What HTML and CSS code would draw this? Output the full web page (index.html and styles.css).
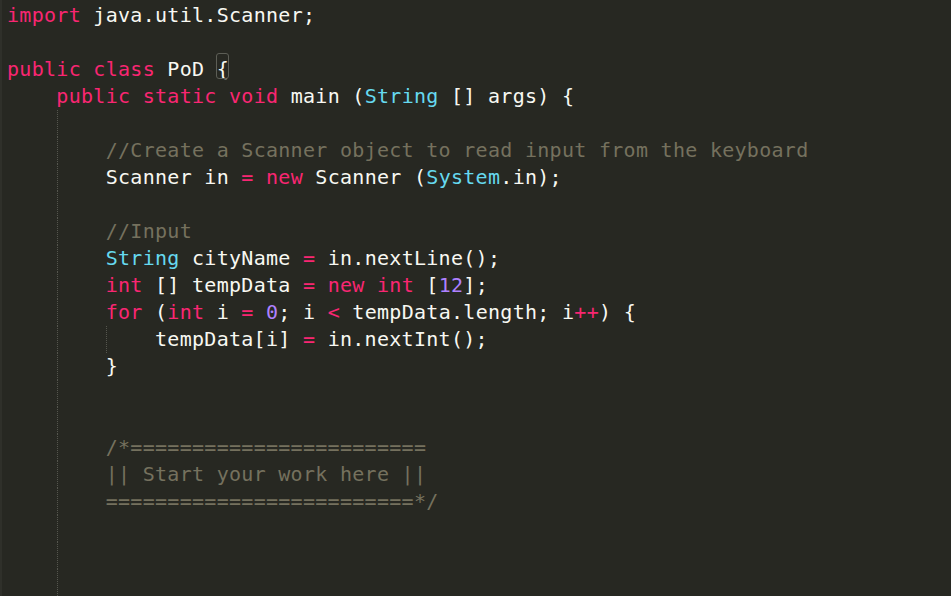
FILE: index.html
```html
<!DOCTYPE html>
<html lang="en">
<head>
<meta charset="utf-8">
<title>PoD.java</title>
<link rel="stylesheet" href="styles.css">
</head>
<body>
<div class="editor">
<div class="ln"><span class="k">import</span> java.util.Scanner;</div>
<div class="ln"></div>
<div class="ln"><span class="k">public</span> <span class="k">class</span> PoD <span class="match">{</span></div>
<div class="ln">    <span class="k">public</span> <span class="k">static</span> <span class="k">void</span> main (<span class="t">String</span> [] args) {</div>
<div class="ln g1"></div>
<div class="ln g1">        <span class="c">//Create a Scanner object to read input from the keyboard</span></div>
<div class="ln g1">        Scanner in <span class="k">=</span> <span class="k">new</span> Scanner (<span class="t">System</span>.in);</div>
<div class="ln g1"></div>
<div class="ln g1">        <span class="c">//Input</span></div>
<div class="ln g1">        <span class="t">String</span> cityName <span class="k">=</span> in.nextLine();</div>
<div class="ln g1">        <span class="k">int</span> [] tempData <span class="k">=</span> <span class="k">new</span> <span class="k">int</span> [<span class="n">12</span>];</div>
<div class="ln g1">        <span class="k">for</span> (<span class="k">int</span> i <span class="k">=</span> <span class="n">0</span>; i <span class="k">&lt;</span> tempData.length; i<span class="k">++</span>) {</div>
<div class="ln g2">            tempData[i] <span class="k">=</span> in.nextInt();</div>
<div class="ln g1">        }</div>
<div class="ln g1"></div>
<div class="ln g1"></div>
<div class="ln g1">        <span class="c">/*========================</span></div>
<div class="ln g1">        <span class="c">|| Start your work here ||</span></div>
<div class="ln g1">        <span class="c">=========================*/</span></div>
<div class="ln g1"></div>
<div class="ln g1"></div>
<div class="ln g1"></div>
</div>
</body>
</html>
```
FILE: styles.css
```css
html, body {
  margin: 0;
  padding: 0;
  background: #272822;
  height: 100%;
  overflow: hidden;
}

.editor {
  box-sizing: border-box;
  height: 596px;
  border-left: 2px solid #2f302a;
  padding: 2.3px 0 0 5px;
  font-family: "DejaVu Sans Mono", "Liberation Mono", monospace;
  font-size: 20px;
  letter-spacing: 0.29px;
  color: #f8f8f2;
}

.ln {
  height: 27px;
  line-height: 27px;
  white-space: pre;
  background-repeat: repeat-y;
  background-size: 1px 2px;
}

.g1 {
  background-image: linear-gradient(to bottom, #55564e 50%, transparent 50%);
  background-position: 50px 0;
}

.g2 {
  background-image: linear-gradient(to bottom, #55564e 50%, transparent 50%),
                    linear-gradient(to bottom, #55564e 50%, transparent 50%);
  background-position: 50px 0, 99px 0;
}

.k { color: #f92672; }
.t { color: #66d9ef; }
.c { color: #75715e; }
.n { color: #ae81ff; }

.match {
  position: relative;
}

.match::after {
  content: "";
  position: absolute;
  left: -0.5px;
  right: 0;
  top: -4px;
  bottom: 2px;
  border: 1px solid #5d5e56;
  border-radius: 3px;
}
```
